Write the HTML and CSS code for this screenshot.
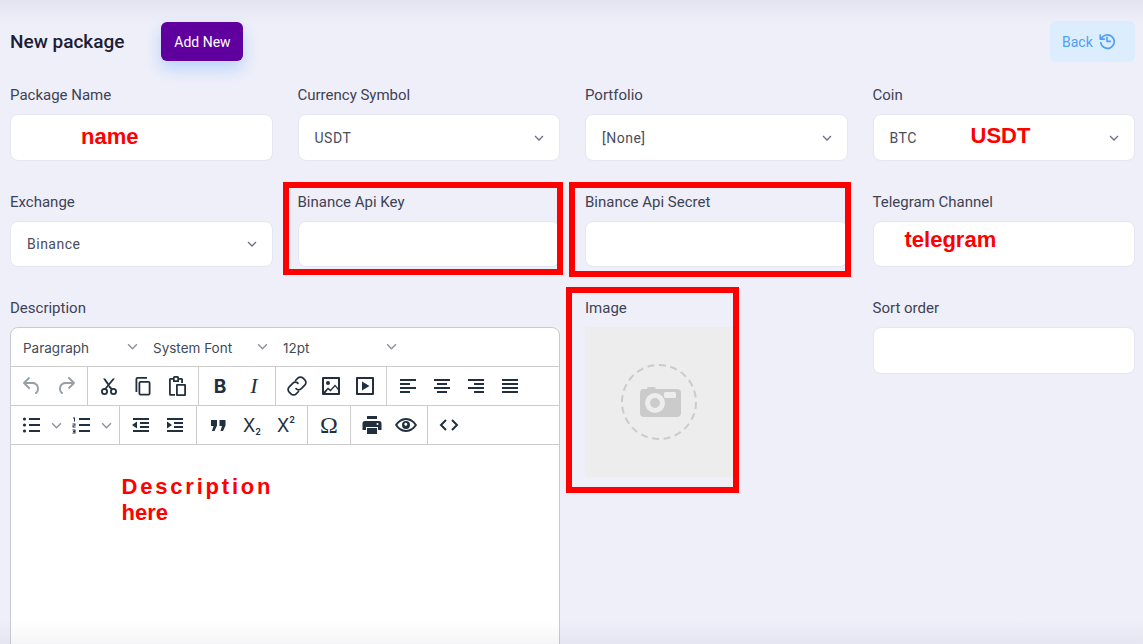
FILE: index.html
```html
<!DOCTYPE html>
<html lang="en">
<head>
  <meta charset="UTF-8">
  <title>New package</title>
  <link rel="stylesheet" href="styles.css">
</head>
<body>
  <svg class="sprites" width="0" height="0">
    <symbol id="i-chevron" viewBox="0 0 10 6"><path d="M1 1l4 4 4-4" fill="none" stroke="currentColor" stroke-width="1.3"/></symbol>
    <symbol id="i-undo" viewBox="0 0 24 24"><path d="M6.4 8H12c3.7 0 6.2 2 6.8 5.1.6 2.7-.4 5.6-2.3 6.8a1 1 0 0 1-1-1.8c1.1-.6 1.8-2.7 1.4-4.6-.5-2.1-2.1-3.5-4.9-3.5H6.4l3.3 3.3a1 1 0 1 1-1.4 1.4l-5-5a1 1 0 0 1 0-1.4l5-5a1 1 0 0 1 1.4 1.4L6.4 8Z"/></symbol>
    <symbol id="i-redo" viewBox="0 0 24 24"><path d="M17.6 10H12c-2.8 0-4.4 1.4-4.9 3.5-.4 2 .3 4 1.4 4.6a1 1 0 1 1-1 1.8c-2-1.2-2.9-4.1-2.3-6.8.6-3 3-5.1 6.8-5.1h5.6l-3.3-3.3a1 1 0 1 1 1.4-1.4l5 5a1 1 0 0 1 0 1.4l-5 5a1 1 0 0 1-1.4-1.4l3.3-3.3Z"/></symbol>
    <symbol id="i-cut" viewBox="0 0 24 24"><path d="M6 4.500l5 7.200 1.200-1.600L8.200 4.500H6zM18 4.500h-2.200L6.900 15.200l1.400 1.100L18 4.500z"/><path d="M16 15.300l-3.500-4-1.100 1.600 3.200 3.700z"/><g fill="none" stroke="currentColor" stroke-width="1.800"><circle cx="7.500" cy="17.500" r="2.600"/><circle cx="16.500" cy="17.500" r="2.600"/></g></symbol>
    <symbol id="i-copy" viewBox="0 0 24 24"><path d="M16 3H6.500a2 2 0 0 0-2 2v13h1.800V4.800H16z"/><path fill-rule="evenodd" d="M9.500 7h8a2 2 0 0 1 2 2v10.500a2 2 0 0 1-2 2h-8a2 2 0 0 1-2-2V9a2 2 0 0 1 2-2zm-.2 1.800v10.900h8.400V8.800z"/></symbol>
    <symbol id="i-paste" viewBox="0 0 24 24"><path d="M5.500 4H8v1.800H5.800V20H10v1.800H5.500A1.500 1.500 0 0 1 4 20.300V5.500A1.500 1.500 0 0 1 5.500 4zM14 4h2.500A1.500 1.500 0 0 1 18 5.500V9h-1.800V5.800H14z"/><path fill-rule="evenodd" d="M9.500 2h3A1.500 1.500 0 0 1 14 3.500V8H8V3.500A1.500 1.500 0 0 1 9.500 2zm.2 1.700v2.600h2.600V3.700z"/><path fill-rule="evenodd" d="M12 10h8a1 1 0 0 1 1 1v10a1 1 0 0 1-1 1h-8a1 1 0 0 1-1-1V11a1 1 0 0 1 1-1zm.8 1.800v8.400h6.400v-8.400z"/></symbol>
    <symbol id="i-link" viewBox="0 0 24 24"><g fill="none" stroke="currentColor" stroke-width="1.700" stroke-linecap="round"><path d="M10.500 6.500l2.300-2.300a3.700 3.700 0 0 1 5.300 0l1.700 1.700a3.700 3.700 0 0 1 0 5.300l-3.500 3.500a3.700 3.700 0 0 1-5.300 0"/><path d="M13.500 17.500l-2.300 2.300a3.700 3.700 0 0 1-5.300 0l-1.700-1.700a3.700 3.700 0 0 1 0-5.300l3.500-3.500a3.700 3.700 0 0 1 5.300 0"/></g></symbol>
    <symbol id="i-image" viewBox="0 0 24 24"><path fill-rule="evenodd" d="M4 3h16a1 1 0 0 1 1 1v16a1 1 0 0 1-1 1H4a1 1 0 0 1-1-1V4a1 1 0 0 1 1-1zm1 2v14h14V5H5z"/><circle cx="9" cy="9" r="2"/><path d="M5 17.500l4-4 2.500 2 4.500-5 3 3.500v2l-3-3.400-4.400 4.900-2.600-2.100L6.500 19H5z"/></symbol>
    <symbol id="i-media" viewBox="0 0 24 24"><path fill-rule="evenodd" d="M4 3h16a1 1 0 0 1 1 1v16a1 1 0 0 1-1 1H4a1 1 0 0 1-1-1V4a1 1 0 0 1 1-1zm1 2v14h14V5H5z"/><path d="M9 7.500l7.500 4.500L9 16.500z"/></symbol>
    <symbol id="i-left" viewBox="0 0 24 24"><path d="M4 5h16v2H4zM4 9h10v2H4zM4 13h16v2H4zM4 17h10v2H4z"/></symbol>
    <symbol id="i-center" viewBox="0 0 24 24"><path d="M4 5h16v2H4zM7 9h10v2H7zM4 13h16v2H4zM7 17h10v2H7z"/></symbol>
    <symbol id="i-right" viewBox="0 0 24 24"><path d="M4 5h16v2H4zM10 9h10v2H10zM4 13h16v2H4zM10 17h10v2H10z"/></symbol>
    <symbol id="i-justify" viewBox="0 0 24 24"><path d="M4 5h16v2H4zM4 9h16v2H4zM4 13h16v2H4zM4 17h16v2H4z"/></symbol>
    <symbol id="i-bullets" viewBox="0 0 24 24"><path d="M10 5h11v2H10zM10 11h11v2H10zM10 17h11v2H10z"/><circle cx="5.500" cy="6" r="1.600"/><circle cx="5.500" cy="12" r="1.600"/><circle cx="5.500" cy="18" r="1.600"/></symbol>
    <symbol id="i-numbers" viewBox="0 0 24 24"><path d="M10 5h11v2H10zM10 11h11v2H10zM10 17h11v2H10z"/><path d="M4 4.500h2v4H5V5.500H4zM3.500 10.500h3v2.300h-2v.7h2v1h-3v-2.300h2v-.7h-2zM3.500 16.500h3v4h-3v-1h2v-.5h-1.500v-1h1.500v-.5h-2z"/></symbol>
    <symbol id="i-outdent" viewBox="0 0 24 24"><path d="M4 5h16v2H4zM11 9h9v2h-9zM11 13h9v2h-9zM4 17h16v2H4zM8 8.500v7L3 12z"/></symbol>
    <symbol id="i-indent" viewBox="0 0 24 24"><path d="M4 5h16v2H4zM11 9h9v2h-9zM11 13h9v2h-9zM4 17h16v2H4zM4 8.500v7L9 12z"/></symbol>
    <symbol id="i-quote" viewBox="0 0 24 24"><path d="M5 7h6v5.500L8.500 18H6l1.500-5H5zM13.500 7h6v5.500L17 18h-2.500l1.500-5h-2.500z"/></symbol>
    <symbol id="i-print" viewBox="0 0 24 24"><path d="M7 3h10v3H7z"/><path fill-rule="evenodd" d="M5 8h14a2.500 2.500 0 0 1 2.500 2.500V17H18v-3H6v3H2.500v-6.500A2.500 2.500 0 0 1 5 8zm12.500 2a1 1 0 1 0 0 2 1 1 0 0 0 0-2z"/><path d="M7 15h10v6H7z"/></symbol>
    <symbol id="i-eye" viewBox="0 0 24 24"><path fill-rule="evenodd" d="M12 5C7 5 3 8.500 1 12c2 3.500 6 7 11 7s9-3.500 11-7c-2-3.500-6-7-11-7zm0 2c3.700 0 6.900 2.300 8.700 5-1.800 2.700-5 5-8.700 5s-6.900-2.300-8.700-5C5.100 9.300 8.300 7 12 7z"/><path fill-rule="evenodd" d="M12 8a4 4 0 1 0 0 8 4 4 0 0 0 0-8zm-.2 1.800a1.500 1.500 0 0 1 0 3c-.8 0-1.500-.7-1.500-1.500s.7-1.500 1.500-1.500z"/></symbol>
    <symbol id="i-code" viewBox="0 0 24 24"><path d="M9 7l-5 5 5 5M15 7l5 5-5 5" fill="none" stroke="currentColor" stroke-width="2"/></symbol>
    <symbol id="i-history" viewBox="0 0 24 24"><g fill="none" stroke="currentColor" stroke-width="2.200" stroke-linecap="round" stroke-linejoin="round"><path d="M4.500 9a9 9 0 1 1-.8 5"/><path d="M3 4V9.500h5.500"/><path d="M12 7V12.500h4.500"/></g></symbol>
  </svg>

  <div class="page">
    <header class="topbar">
      <h1>New package</h1>
      <button class="btn-add">Add New</button>
      <button class="btn-back">Back <svg class="back-icon"><use href="#i-history"/></svg></button>
    </header>

    <form class="form-grid">
      <div class="field">
        <label>Package Name</label>
        <input class="control" type="text">
        <span class="note note-name">name</span>
      </div>
      <div class="field">
        <label>Currency Symbol</label>
        <div class="control select">USDT<svg class="chevron"><use href="#i-chevron"/></svg></div>
      </div>
      <div class="field">
        <label>Portfolio</label>
        <div class="control select">[None]<svg class="chevron"><use href="#i-chevron"/></svg></div>
      </div>
      <div class="field">
        <label>Coin</label>
        <div class="control select">BTC<svg class="chevron"><use href="#i-chevron"/></svg></div>
        <span class="note note-coin">USDT</span>
      </div>

      <div class="field">
        <label>Exchange</label>
        <div class="control select">Binance<svg class="chevron"><use href="#i-chevron"/></svg></div>
      </div>
      <div class="field">
        <label>Binance Api Key</label>
        <input class="control" type="text">
        <span class="mark mark-key"></span>
      </div>
      <div class="field">
        <label>Binance Api Secret</label>
        <input class="control" type="text">
        <span class="mark mark-secret"></span>
      </div>
      <div class="field">
        <label>Telegram Channel</label>
        <input class="control" type="text">
        <span class="note note-telegram">telegram</span>
      </div>

      <div class="field field-wide">
        <label>Description</label>
        <div class="editor">
          <div class="menu-row">
            <span class="menu menu-para">Paragraph<svg class="chevron"><use href="#i-chevron"/></svg></span>
            <span class="menu menu-font">System Font<svg class="chevron"><use href="#i-chevron"/></svg></span>
            <span class="menu menu-size">12pt<svg class="chevron"><use href="#i-chevron"/></svg></span>
          </div>
          <div class="tool-row">
            <div class="tool-group">
              <span class="tool off"><svg><use href="#i-undo"/></svg></span>
              <span class="tool off"><svg><use href="#i-redo"/></svg></span>
            </div>
            <div class="tool-group">
              <span class="tool"><svg><use href="#i-cut"/></svg></span>
              <span class="tool"><svg><use href="#i-copy"/></svg></span>
              <span class="tool"><svg><use href="#i-paste"/></svg></span>
            </div>
            <div class="tool-group">
              <span class="tool glyph-b">B</span>
              <span class="tool glyph-i">I</span>
            </div>
            <div class="tool-group">
              <span class="tool"><svg><use href="#i-link"/></svg></span>
              <span class="tool"><svg><use href="#i-image"/></svg></span>
              <span class="tool"><svg><use href="#i-media"/></svg></span>
            </div>
            <div class="tool-group">
              <span class="tool"><svg><use href="#i-left"/></svg></span>
              <span class="tool"><svg><use href="#i-center"/></svg></span>
              <span class="tool"><svg><use href="#i-right"/></svg></span>
              <span class="tool"><svg><use href="#i-justify"/></svg></span>
            </div>
          </div>
          <div class="tool-row">
            <div class="tool-group">
              <span class="tool tool-split"><svg><use href="#i-bullets"/></svg><svg class="chevron"><use href="#i-chevron"/></svg></span>
              <span class="tool tool-split"><svg><use href="#i-numbers"/></svg><svg class="chevron"><use href="#i-chevron"/></svg></span>
            </div>
            <div class="tool-group">
              <span class="tool"><svg><use href="#i-outdent"/></svg></span>
              <span class="tool"><svg><use href="#i-indent"/></svg></span>
            </div>
            <div class="tool-group">
              <span class="tool"><svg><use href="#i-quote"/></svg></span>
              <span class="tool glyph-x">X<sub>2</sub></span>
              <span class="tool glyph-x">X<sup>2</sup></span>
            </div>
            <div class="tool-group">
              <span class="tool glyph-o">Ω</span>
            </div>
            <div class="tool-group">
              <span class="tool"><svg><use href="#i-print"/></svg></span>
              <span class="tool"><svg><use href="#i-eye"/></svg></span>
            </div>
            <div class="tool-group">
              <span class="tool"><svg><use href="#i-code"/></svg></span>
            </div>
          </div>
          <div class="editor-body">
            <p class="note-desc"><span class="spaced">Description</span><br>here</p>
          </div>
        </div>
      </div>

      <div class="field">
        <label>Image</label>
        <div class="image-box">
          <svg width="78" height="78" viewBox="0 0 78 78">
            <circle cx="39" cy="39" r="37" fill="none" stroke="#cbcbcb" stroke-width="2" stroke-dasharray="7 4.600"/>
            <path fill-rule="evenodd" fill="#cbcbcb" d="M24 26h3a2 2 0 0 1 2-2h5a2 2 0 0 1 2 2h21a4 4 0 0 1 4 4v20a4 4 0 0 1-4 4H24a4 4 0 0 1-4-4V30a4 4 0 0 1 4-4zm21.500 3a1.500 1.500 0 0 0-1.500 1.500v3a1.500 1.500 0 0 0 1.500 1.500h9a1.500 1.500 0 0 0 1.500-1.500v-3a1.500 1.500 0 0 0-1.500-1.500zM35 30a10 10 0 1 0 0 20 10 10 0 0 0 0-20zm0 5a5 5 0 1 1 0 10 5 5 0 0 1 0-10z"/>
          </svg>
        </div>
        <span class="mark mark-image"></span>
      </div>
      <div class="field">
        <label>Sort order</label>
        <input class="control" type="text">
      </div>
    </form>
  </div>
</body>
</html>
```

FILE: styles.css
```css
html, body {
  margin: 0;
  height: 644px;
  overflow: hidden;
}

body {
  background: #eeeff9;
  font-family: "Roboto", "Open Sans", sans-serif;
  color: #3f4254;
  position: relative;
}

/* soft shade along the top and bottom edges */
body::before,
body::after {
  content: "";
  position: absolute;
  left: 0;
  right: 0;
  z-index: 5;
  pointer-events: none;
}
body::before {
  top: 0;
  height: 24px;
  background: linear-gradient(rgba(60, 50, 90, 0.06), rgba(60, 50, 90, 0));
}
body::after {
  bottom: 0;
  height: 24px;
  background: linear-gradient(rgba(60, 50, 90, 0), rgba(60, 50, 90, 0.05));
}

.sprites {
  position: absolute;
}

.page {
  padding: 22px 8px 0 10px;
}

.topbar {
  display: flex;
  align-items: center;
  height: 40px;
}

.topbar h1 {
  margin: -2px 37px 0 0;
  font-size: 19px;
  font-weight: 500;
  color: #1c1d36;
}

.btn-add {
  width: 82px;
  height: 39px;
  margin-top: -1px;
  border: 0;
  border-radius: 6px;
  background: #5f009e;
  color: #fff;
  font: 14px "Roboto", sans-serif;
  box-shadow: 0 8px 16px rgba(110, 170, 250, 0.4);
}

.btn-back {
  margin-left: auto;
  width: 85px;
  height: 41px;
  margin-top: -1px;
  padding: 0 0 0 12px;
  border: 0;
  border-radius: 6px;
  background: #dcedfd;
  color: #4f9ff5;
  font: 14px "Roboto", sans-serif;
  display: flex;
  align-items: center;
  gap: 5px;
}

.back-icon {
  width: 18px;
  height: 18px;
  margin-top: -1px;
}

.form-grid {
  display: grid;
  grid-template-columns: repeat(4, 1fr);
  column-gap: 25px;
  row-gap: 30px;
  margin-top: 22px;
  align-items: start;
}

.field {
  position: relative;
}

.field-wide {
  grid-column: span 2;
}

.field label {
  display: block;
  height: 20px;
  margin-bottom: 9px;
  padding-top: 1px;
  font-size: 15px;
  line-height: 20px;
  color: #3f4254;
}

.control {
  display: flex;
  align-items: center;
  box-sizing: border-box;
  width: 100%;
  height: 46.500px;
  padding: 1px 15px 0 16px;
  background: #fff;
  border: 1px solid #e4e6f3;
  border-radius: 8px;
  font-size: 14px;
  color: #4a4c60;
  letter-spacing: 0.5px;
}

.select {
  justify-content: space-between;
}

.chevron {
  width: 10px;
  height: 6px;
  color: #6c6f85;
  flex: none;
}

/* red notes somebody painted on the screenshot */
.note,
.note-desc {
  font-family: "Liberation Sans", Arial, sans-serif;
  font-weight: 700;
  font-size: 22px;
  color: #f00;
}

.note {
  position: absolute;
  line-height: 26px;
}
.note-name { left: 71px; top: 40px; }
.note-coin { left: 98px; top: 39px; }
.note-telegram { left: 32px; top: 36.500px; }

.mark {
  position: absolute;
  border: 6px solid #f00;
  box-sizing: border-box;
  pointer-events: none;
}
.mark-key { left: -15px; top: -8.500px; width: 280px; height: 93px; }
.mark-secret { left: -16px; top: -8.500px; width: 282px; height: 95px; }
.mark-image { left: -19px; top: -10px; width: 173px; height: 206px; }

.image-box {
  width: 148px;
  height: 150px;
  background: #ededed;
  display: flex;
  align-items: center;
  justify-content: center;
}

.editor {
  box-sizing: border-box;
  height: 420px;
  background: #fff;
  border: 1px solid #c9cbd0;
  border-radius: 8px;
  font-family: "Inter", "Noto Sans", sans-serif;
  color: #222f3e;
}

.menu-row {
  display: flex;
  align-items: center;
  height: 39px;
  padding-top: 2px;
  box-sizing: border-box;
  border-bottom: 1px solid #cccccc;
  font-size: 13.500px;
  color: #3f4a58;
}

.menu {
  display: flex;
  align-items: center;
  justify-content: space-between;
  box-sizing: border-box;
  padding-left: 12px;
}
.menu-para { width: 130px; padding-right: 3px; }
.menu-font { width: 130px; padding-right: 3px; }
.menu-size { width: 130px; padding-right: 4px; }

.menu .chevron {
  width: 11px;
  height: 7px;
  margin-top: -3px;
  color: #8d929a;
}

.tool-row {
  display: flex;
  height: 39px;
  box-sizing: border-box;
  border-bottom: 1px solid #cccccc;
}

.tool-group {
  display: flex;
  align-items: center;
  padding: 0 4px;
  border-right: 1px solid #cccccc;
}
.tool-group:last-child {
  border-right: 0;
}

.tool {
  display: flex;
  align-items: center;
  justify-content: center;
  width: 34px;
  height: 34px;
  fill: #222f3e;
  color: #222f3e;
}
.tool svg {
  width: 24px;
  height: 24px;
  flex: none;
}
.tool.off {
  fill: #9aa0a8;
  color: #9aa0a8;
}

.tool-split {
  width: 50px;
  gap: 8px;
  justify-content: flex-start;
  padding-left: 4px;
  box-sizing: border-box;
}
.tool-split svg.chevron {
  width: 11px;
  height: 7px;
  color: #8d929a;
}

.glyph-b {
  font-weight: 700;
  font-size: 19px;
}
.glyph-i {
  font-family: "Liberation Serif", serif;
  font-style: italic;
  font-size: 22px;
}
.glyph-x {
  font-size: 18px;
}
.glyph-x sub,
.glyph-x sup {
  font-size: 9px;
  font-weight: 600;
  line-height: 0;
}
.glyph-x sub { align-self: center; margin-top: 14px; }
.glyph-x sup { align-self: center; margin-bottom: 10px; }
.glyph-o {
  font-family: "Liberation Serif", serif;
  font-size: 24px;
}

.editor-body {
  padding: 29px 110.500px;
}

.note-desc {
  margin: 0;
  line-height: 26px;
}
.spaced {
  letter-spacing: 2.800px;
}
```
